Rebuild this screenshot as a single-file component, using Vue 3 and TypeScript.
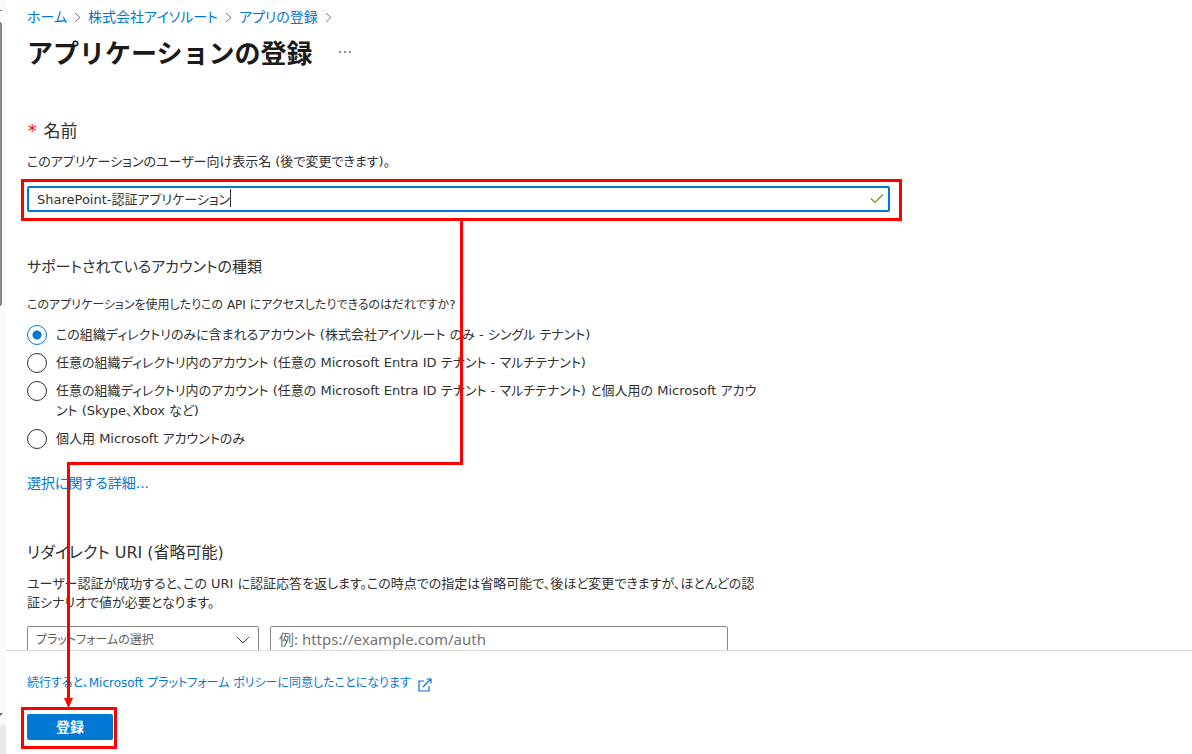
<script setup lang="ts">
import { ref } from 'vue'

interface Crumb {
  label: string
}

interface AccountType {
  id: string
  lines: string[]
}

const crumbs: Crumb[] = [
  { label: 'ホーム' },
  { label: '株式会社アイソルート' },
  { label: 'アプリの登録' },
]

const accountTypes: AccountType[] = [
  { id: 'single', lines: ['この組織ディレクトリのみに含まれるアカウント (株式会社アイソルート のみ - シングル テナント)'] },
  { id: 'multi', lines: ['任意の組織ディレクトリ内のアカウント (任意の Microsoft Entra ID テナント - マルチテナント)'] },
  {
    id: 'multi-personal',
    lines: [
      '任意の組織ディレクトリ内のアカウント (任意の Microsoft Entra ID テナント - マルチテナント) と個人用の Microsoft アカウ',
      'ント (Skype、Xbox など)',
    ],
  },
  { id: 'personal', lines: ['個人用 Microsoft アカウントのみ'] },
]

const appName = ref('SharePoint-認証アプリケーション')
const accountType = ref('single')
const platform = ref('')
const redirectUri = ref('')
</script>

<template>
  <div class="shell">
    <div class="rail" aria-hidden="true">
      <span class="rail-up"></span>
      <span class="rail-thumb"></span>
      <svg class="rail-down" viewBox="0 0 3 4"><path d="M0 0H3L0 3Z" /></svg>
      <span class="rail-corner"></span>
    </div>

    <div class="blade">
      <main class="content">
        <nav class="crumbs" aria-label="階層">
          <template v-for="crumb in crumbs" :key="crumb.label">
            <a href="#">{{ crumb.label }}</a>
            <svg class="chevron" viewBox="0 0 7 11"><path d="M1 1L6 5.5L1 10" /></svg>
          </template>
        </nav>

        <header class="title-row">
          <h1>アプリケーションの登録</h1>
          <button class="more" type="button" aria-label="その他">
            <svg viewBox="0 0 14 4"><circle cx="2" cy="2" r="0.9" /><circle cx="7" cy="2" r="0.9" /><circle cx="12" cy="2" r="0.9" /></svg>
          </button>
        </header>

        <section class="name">
          <label class="heading" for="app-name"><span class="required">*</span>名前</label>
          <p class="hint">このアプリケーションのユーザー向け表示名 (後で変更できます)。</p>
          <div class="name-field marked">
            <input id="app-name" v-model="appName" type="text" />
            <span class="caret" aria-hidden="true"><span class="caret-text">{{ appName }}</span></span>
            <svg class="check" viewBox="0 0 14 11"><path d="M1 5.5L5 9.5L13 1.5" /></svg>
          </div>
        </section>

        <section class="accounts">
          <h2 class="heading">サポートされているアカウントの種類</h2>
          <fieldset>
            <legend>このアプリケーションを使用したりこの API にアクセスしたりできるのはだれですか?</legend>
            <label v-for="type in accountTypes" :key="type.id" class="option" :for="type.id">
              <input :id="type.id" v-model="accountType" type="radio" name="account-type" :value="type.id" />
              <span class="option-text">
                <span v-for="line in type.lines" :key="line" class="line">{{ line }}</span>
              </span>
            </label>
          </fieldset>
          <a class="details" href="#">選択に関する詳細...</a>
        </section>

        <section class="redirect">
          <h2 class="heading">リダイレクト URI (省略可能)</h2>
          <p class="hint">
            <span class="line">ユーザー認証が成功すると、この URI に認証応答を返します。この時点での指定は省略可能で、後ほど変更できますが、ほとんどの認</span>
            <span class="line">証シナリオで値が必要となります。</span>
          </p>
          <div class="redirect-fields">
            <div class="select-box">
              <select v-model="platform" aria-label="プラットフォームの選択">
                <option value="">プラットフォームの選択</option>
              </select>
              <svg class="down" viewBox="0 0 14 8"><path d="M1 1L7 7L13 1" /></svg>
            </div>
            <input v-model="redirectUri" type="text" aria-label="リダイレクト URI" placeholder="例: https://example.com/auth" />
          </div>
        </section>
      </main>

      <footer class="footer">
        <a class="policy" href="#">
          <span>続行すると、Microsoft プラットフォーム ポリシーに同意したことになります</span>
          <svg viewBox="0 0 14 14"><path d="M6 3H1V13H11V8M5 9L13 1M8.5 1H13V5.5" /></svg>
        </a>
        <div class="submit marked">
          <button type="button">登録</button>
        </div>
      </footer>
    </div>

    <svg class="flow-arrow" viewBox="0 0 400 490" aria-hidden="true">
      <path class="flow-line" d="M397.500 0V243.500H4.500V478" />
      <path class="flow-head" d="M0 478H9L4.500 488Z" />
    </svg>
  </div>
</template>

<style>
body {
  margin: 0;
  background: #fff;
}
</style>

<style scoped>
.shell {
  position: relative;
  display: flex;
  height: 100vh;
  overflow: hidden;
  color: #323130;
  font-family: "DejaVu Sans", "Noto Sans CJK JP", sans-serif;
  font-feature-settings: "palt";
  font-size: 13px;
  line-height: 20px;
}

.shell *,
.shell *::before,
.shell *::after {
  box-sizing: border-box;
}

button,
input,
select {
  margin: 0;
  font: inherit;
  font-feature-settings: inherit;
  color: inherit;
}

h1,
h2,
p {
  margin: 0;
}

a {
  color: #0078d4;
  text-decoration: none;
}

.line {
  display: block;
  white-space: nowrap;
}

.rail {
  display: flex;
  flex: 0 0 6px;
  flex-direction: column;
  background: #fafafa;
}

.rail-up {
  width: 2px;
  height: 1px;
  margin: 10px 0 11px;
  background: #8a8a8a;
}

.rail-thumb {
  width: 2px;
  height: 284px;
  border-radius: 0 2px 2px 0;
  background: #8a8a8a;
}

.rail-down {
  width: 3px;
  height: 4px;
  margin-top: auto;
  margin-bottom: 8px;
  fill: #606060;
}

.rail-corner {
  height: 29px;
  background: #e8e8e8;
}

.blade {
  display: flex;
  flex: 1;
  flex-direction: column;
  min-width: 0;
}

.content {
  flex: 1;
  min-height: 0;
  padding: 7px 21px 0;
  overflow: hidden;
}

.crumbs {
  display: flex;
  align-items: center;
  gap: 7px;
  font-size: 14px;
}

.chevron {
  width: 7px;
  height: 11px;
  fill: none;
  stroke: #797775;
}

.title-row {
  display: flex;
  align-items: center;
  gap: 24px;
  margin-top: 7px;
}

h1 {
  color: #1b1a19;
  font-family: "Noto Sans CJK JP", sans-serif;
  font-size: 26px;
  font-weight: 700;
  line-height: 36px;
  font-feature-settings: normal;
}

.more {
  display: flex;
  padding: 2px;
  border: 0;
  background: none;
}

.more svg {
  width: 14px;
  height: 4px;
  fill: #605e5c;
}

.heading {
  display: block;
  font-size: 16px;
  font-weight: 400;
  line-height: 24px;
}

.accounts .heading {
  font-size: 15px;
}

.name .heading {
  font-size: 17px;
}

.required {
  margin: 0 7px 0 1px;
  color: #f00;
}

.name {
  margin-top: 49px;
}

.name .hint {
  margin: 9px 0 14px;
}

.name-field {
  width: 100%;
  max-width: 863px;
}

.marked {
  position: relative;
}

.marked::after {
  position: absolute;
  inset: -7px -12px -9px -6px;
  border: 3px solid #f00;
  content: "";
  pointer-events: none;
}

.name-field input {
  display: block;
  width: 100%;
  height: 26px;
  padding: 0 32px 2px 8px;
  border: 2px solid #0078d4;
  border-radius: 2px;
  outline: 0;
  background: #fff;
}

.caret {
  position: absolute;
  top: 3px;
  left: 10px;
  height: 18px;
  border-right: 1px solid #323130;
  pointer-events: none;
}

.caret-text {
  visibility: hidden;
  white-space: nowrap;
}

.check {
  position: absolute;
  top: 7px;
  right: 6px;
  width: 14px;
  height: 11px;
  fill: none;
  stroke: #57a300;
  stroke-width: 1.2;
}

.accounts {
  margin-top: 43px;
}

fieldset {
  display: flex;
  flex-direction: column;
  gap: 8px;
  margin: 16px 0 0;
  padding: 0;
  border: 0;
}

legend {
  margin-bottom: 10px;
  padding: 0;
  font-size: 12px;
  white-space: nowrap;
}

.option {
  display: flex;
  align-items: flex-start;
  gap: 9px;
}

.option input {
  flex: none;
  width: 20px;
  height: 20px;
  border: 1px solid #323130;
  border-radius: 50%;
  background: #fff;
  appearance: none;
}

.option input:checked {
  border-color: #0078d4;
  background: radial-gradient(circle, #0078d4 0 4px, #fff 5px);
}

.details {
  display: inline-block;
  margin-top: 24px;
  font-size: 14px;
}

.redirect {
  margin-top: 47px;
}

.redirect .hint {
  margin: 9px 0 14px;
  line-height: 19px;
}

.redirect-fields {
  display: flex;
  gap: 11px;
  max-width: 701px;
}

.redirect-fields input,
.redirect-fields select {
  width: 100%;
  height: 28px;
  padding: 0 8px;
  border: 1px solid #8a8886;
  border-radius: 2px;
  background: #fff;
  color: #605e5c;
}

.redirect-fields input {
  flex: 1;
  min-width: 0;
  padding-bottom: 2px;
  font-family: "Noto Sans", "Noto Sans CJK JP", sans-serif;
  font-size: 15px;
}

.redirect-fields input::placeholder {
  color: #767472;
  opacity: 1;
}

.select-box {
  position: relative;
  flex: 0 0 232px;
}

.select-box select {
  appearance: none;
  font-size: 12px;
}

.down {
  position: absolute;
  top: 10px;
  right: 9px;
  width: 14px;
  height: 8px;
  fill: none;
  stroke: #484644;
  pointer-events: none;
}

.footer {
  padding: 22px 21px 14px;
  border-top: 1px solid #dcdcdc;
  background: #fff;
}

.policy {
  display: flex;
  align-items: center;
  gap: 7px;
  width: fit-content;
  font-size: 12px;
  white-space: nowrap;
}

.policy svg {
  width: 14px;
  height: 14px;
  margin-top: 4px;
  fill: none;
  stroke: #0b6be0;
  stroke-width: 1.2;
}

.submit {
  width: 86px;
  margin-top: 21px;
}

.submit::after {
  inset: -7px -4px -9px -6px;
}

.submit button {
  display: block;
  width: 100%;
  height: 26px;
  padding: 0;
  border: 0;
  border-radius: 2px;
  background: #0078d4;
  color: #fff;
  font-size: 14px;
  font-weight: 700;
}

.flow-arrow {
  position: absolute;
  top: 220px;
  left: 64px;
  width: 400px;
  height: 490px;
  pointer-events: none;
}

.flow-line {
  fill: none;
  stroke: #f00;
  stroke-width: 3;
}

.flow-head {
  fill: #f00;
}
</style>
